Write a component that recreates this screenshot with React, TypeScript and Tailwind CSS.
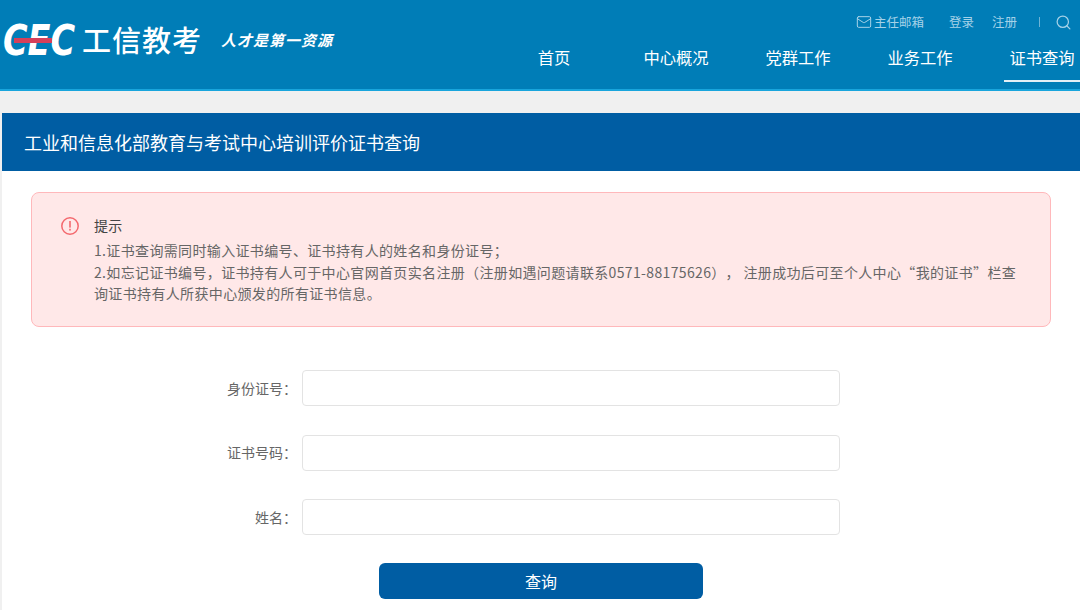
import { Mail, Search } from "lucide-react";

const navItems = ["首页", "中心概况", "党群工作", "业务工作", "证书查询"];

const formRows = ["身份证号", "证书号码", "姓名"];

const cjk = "font-['Noto_Sans_CJK_SC','Liberation_Sans',sans-serif]";

const Logo = () => (
    <div className="flex items-center">
        <div className="relative w-[73px] h-[32px]">
            <span className="block origin-left scale-x-[0.78] font-['DejaVu_Sans',sans-serif] font-bold italic text-[43px] leading-[32px] text-white whitespace-nowrap">
                CEC
            </span>
            <div className="absolute left-[11px] top-[14px] w-[38px] h-[5px] bg-[#d5405a]" />
        </div>
        <span className="ml-[6px] -mt-[2px] text-[29px] leading-[32px] font-medium tracking-[1px] text-white whitespace-nowrap">
            工信教考
        </span>
        <span className="ml-[19px] text-[15px] leading-[16px] font-bold italic tracking-[1px] text-white whitespace-nowrap">
            人才是第一资源
        </span>
    </div>
);

const Header = () => (
    <header className="h-[91px] flex justify-between bg-[#007db7] border-b-2 border-[#19a5dc]">
        <div className="pt-[24px] pl-[3px]">
            <Logo />
        </div>
        <div className="flex flex-col items-end">
            <div className="h-[44px] flex items-center text-[12.5px] text-[#a5d2e8] whitespace-nowrap">
                <Mail size={16} strokeWidth={1.5} />
                <span className="ml-[2px]">主任邮箱</span>
                <span className="ml-[25px]">登录</span>
                <span className="ml-[18px]">注册</span>
                <div className="ml-[22px] w-px h-[10px] bg-[#6fb4d6]" />
                <Search size={17} strokeWidth={1.75} className="ml-[15px] mr-[8px]" />
            </div>
            <nav className="mt-[2px] flex gap-[46px]">
                {navItems.map((item) => (
                    <a
                        key={item}
                        className={`h-[36px] w-[76px] text-center text-[16.3px] leading-[23px] text-white whitespace-nowrap ${
                            item === "证书查询" ? "border-b-2 border-[#e3eff6]" : ""
                        }`}
                    >
                        {item}
                    </a>
                ))}
            </nav>
        </div>
    </header>
);

const Notice = () => (
    <div className="flex h-[135px] rounded-[8px] border border-[#ffb8bb] bg-[#ffe8e8] pl-[29px] pr-[30px] pt-[19px]">
        <svg width="18" height="18" viewBox="0 0 18 18" className="shrink-0 mt-[5px]" fill="none">
            <circle cx="9" cy="9" r="8.2" stroke="#f4696e" strokeWidth="1.5" />
            <rect x="8.2" y="4" width="1.6" height="6.6" fill="#f4696e" />
            <rect x="8.2" y="11.8" width="1.6" height="1.8" fill="#f4696e" />
        </svg>
        <div className="ml-[15px] text-[14px] leading-[21.5px] tracking-[0.35px] text-[#666] [text-spacing-trim:space-all]">
            <p className="text-[#444] leading-[26px] mb-[2px]">提示</p>
            <p>1.证书查询需同时输入证书编号、证书持有人的姓名和身份证号；</p>
            <p>
                2.如忘记证书编号，证书持有人可于中心官网首页实名注册（注册如遇问题请联系0571-88175626）， 注册成功后可至个人中心“我的证书”栏查询证书持有人所获中心颁发的所有证书信息。
            </p>
        </div>
    </div>
);

export default function App() {
    return (
        <div className={`w-[1080px] h-[610px] overflow-hidden bg-[#f0f0f0] ${cjk}`}>
            <Header />
            <main className="mt-[22px] ml-[2px] bg-white h-[497px]">
                <div className="h-[58px] flex items-center pl-[22px] bg-[#005da3] text-[18px] text-white">
                    工业和信息化部教育与考试中心培训评价证书查询
                </div>
                <div className="pt-[21px] pl-[29px] pr-[29px]">
                    <Notice />
                </div>
                {/* ---- form */}
                <form className="mt-[43px] flex flex-col gap-[28.5px] pl-[180px]">
                    {formRows.map((label) => (
                        <div key={label} className="flex items-center">
                            <label className="w-[115px] text-right text-[14px] text-[#666]">
                                {label}：
                            </label>
                            <input
                                type="text"
                                className="ml-[5px] w-[538px] h-[36px] rounded-[4px] border border-[#e3e3e3] bg-white outline-none"
                            />
                        </div>
                    ))}
                </form>
                <div className="mt-[28px] pl-[377px]">
                    <button className="w-[324px] h-[36px] rounded-[6px] bg-[#005da3] text-[16px] text-white">
                        查询
                    </button>
                </div>
            </main>
        </div>
    );
}
